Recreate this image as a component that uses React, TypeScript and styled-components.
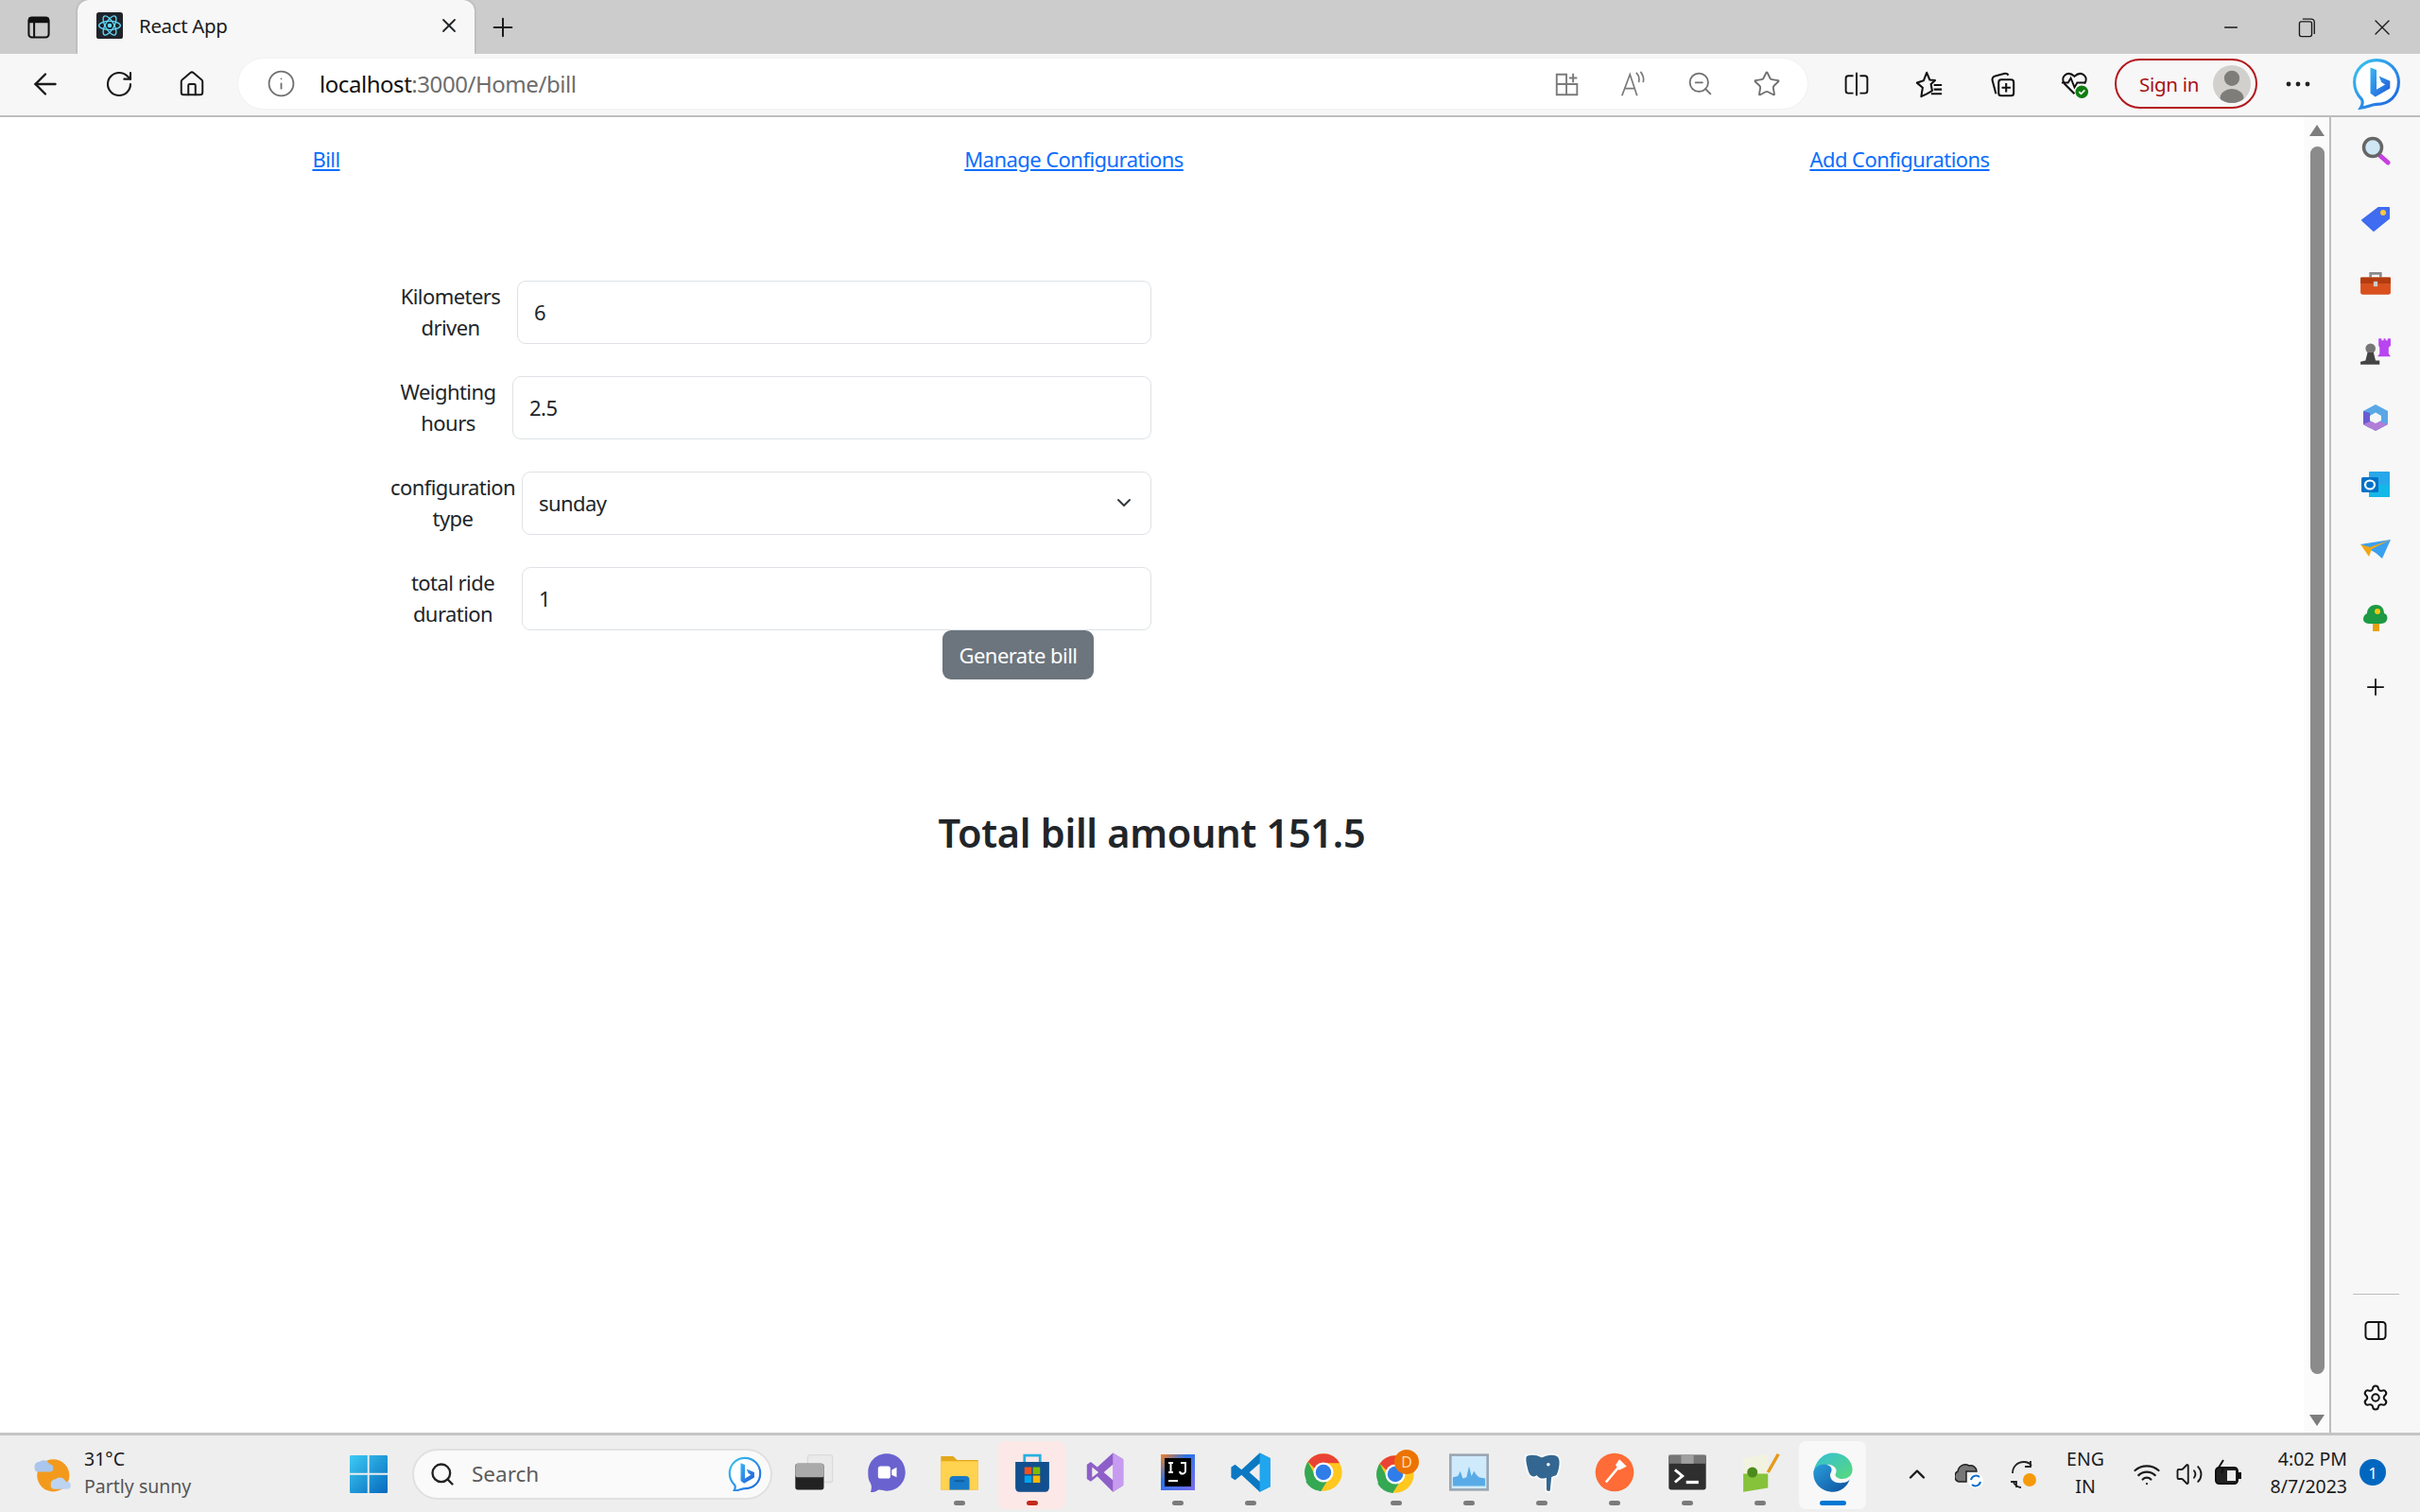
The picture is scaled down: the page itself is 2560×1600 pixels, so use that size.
import { ReactNode } from 'react';
import styled, { createGlobalStyle } from 'styled-components';
import {
  ArrowLeft, ChevronDown, ChevronUp, House, Info, Minus, Plus, RotateCw, Search, Settings, Star, Volume2, Wifi, X, ZoomOut,
} from 'lucide-react';

const UI_FONT = `"Noto Sans", "Open Sans", sans-serif`;

const GlobalStyle = createGlobalStyle`
  html, body { margin: 0; padding: 0; background: #fff; }
  body { font-family: ${UI_FONT}; color: #212529; }
  * { box-sizing: border-box; }
`;

const Desktop = styled.div`
  width: 2560px;
  height: 1600px;
  display: flex;
  flex-direction: column;
  overflow: hidden;
`;

/* ---------- tab strip ---------- */
const TabStrip = styled.div`
  height: 57px;
  flex: none;
  background: #cccccc;
  display: flex;
  align-items: stretch;
`;
const StripButton = styled.div<{ $w: number }>`
  width: ${(p) => p.$w}px;
  flex: none;
  display: flex;
  align-items: center;
  justify-content: center;
  color: #1a1a1a;
`;
const Tab = styled.div`
  width: 420px;
  flex: none;
  background: #f7f7f7;
  border-radius: 12px 12px 0 0;
  display: flex;
  align-items: center;
  padding: 0 15px 4px 20px;
  box-shadow: 0 0 3px rgba(0, 0, 0, 0.25);
`;
const TabTitle = styled.span`
  margin-left: 17px;
  font-size: 20.5px;
  letter-spacing: -0.35px;
  color: #1c1c1c;
  flex: 1;
`;
const WindowControls = styled.div`
  margin-left: auto;
  display: flex;
`;

/* ---------- toolbar ---------- */
const Toolbar = styled.div`
  height: 67px;
  flex: none;
  background: #f7f7f7;
  border-bottom: 2px solid #bdbdbd;
  display: flex;
  align-items: center;
  padding: 0 0 2px 9px;
`;
const ToolButton = styled.div<{ $w: number; $muted?: boolean }>`
  width: ${(p) => p.$w}px;
  flex: none;
  display: flex;
  align-items: center;
  justify-content: center;
  color: ${(p) => (p.$muted ? '#6f6f6f' : '#1a1a1a')};
`;
const AddressBar = styled.div`
  width: 1660px;
  height: 53px;
  margin-left: 11px;
  flex: none;
  background: #fff;
  border-radius: 27px;
  display: flex;
  align-items: center;
  padding: 0 8px 0 29px;
  box-shadow: 0 0 2px rgba(0, 0, 0, 0.08);
`;
const Url = styled.div`
  margin-left: 25px;
  font-size: 24px;
  letter-spacing: -0.45px;
  color: #111;
  flex: 1;
  span { color: #6d6d6d; }
`;
const ToolGroup = styled.div<{ $ml: number }>`
  margin-left: ${(p) => p.$ml}px;
  display: flex;
  align-items: center;
`;
const SignIn = styled.div`
  width: 151px;
  height: 53px;
  margin-left: 4px;
  flex: none;
  border: 2px solid #b3161b;
  border-radius: 27px;
  display: flex;
  align-items: center;
  justify-content: space-between;
  padding: 0 5px 0 24px;
  font-size: 20.5px;
  letter-spacing: -0.3px;
  color: #a80f14;
`;
const Avatar = styled.div`
  width: 40px;
  height: 40px;
  border-radius: 50%;
  background: #d2d0cc;
  display: flex;
  align-items: center;
  justify-content: center;
  overflow: hidden;
`;
const BingSlot = styled.div`
  margin-left: 27px;
  width: 52px;
  flex: none;
  display: flex;
`;

/* ---------- middle area ---------- */
const Page = styled.main`
  width: 2437px;
  flex: none;
  background: #fff;
  font-size: 22px;
  letter-spacing: -0.55px;
  line-height: 36px;
`;
const Middle = styled.div`
  flex: 1;
  min-height: 0;
  display: flex;
`;
const NavRow = styled.nav`
  display: grid;
  grid-template-columns: 690px 892px 855px;
  padding-top: 26px;
`;
const NavCell = styled.div`
  text-align: center;
  a { color: #0d6efd; text-decoration: underline; }
`;
const BillForm = styled.form`
  width: 1218px;
  margin-top: 111px;
  padding-left: 412px;
  display: flex;
  flex-direction: column;
  gap: 34.3px;
`;
const FormRow = styled.div`
  display: flex;
  align-items: center;
  gap: 6px;
  height: 66.7px;
`;
const FieldLabel = styled.label<{ $w: number }>`
  width: ${(p) => p.$w}px;
  flex: none;
  text-align: center;
  line-height: 33.5px;
  white-space: nowrap;
`;
const fieldCss = `
  width: 100%;
  height: 100%;
  border: 1.5px solid #dee2e6;
  border-radius: 9px;
  background: #fff;
  color: #212529;
  padding: 0 17px;
  font: 22px ${UI_FONT};
  letter-spacing: -0.55px;
  outline: none;
  appearance: none;
`;
const FieldBox = styled.div`
  flex: 1;
  height: 100%;
  position: relative;
`;
const TextField = styled.input`${fieldCss}`;
const SelectField = styled.select`${fieldCss}`;
const SelectCaret = styled.span`
  position: absolute;
  right: 17px;
  top: 21px;
  color: #343a40;
  display: flex;
  pointer-events: none;
`;
const ButtonRow = styled.div`
  display: flex;
  justify-content: flex-end;
  padding-right: 61px;
  margin-top: -34.3px;
`;
const GenerateButton = styled.button`
  width: 160px;
  height: 52px;
  padding: 0;
  border: none;
  border-radius: 9px;
  background: #6c757d;
  color: #fff;
  font: 22px ${UI_FONT};
  letter-spacing: -0.55px;
`;
const TotalHeading = styled.h3`
  margin: 135px 0 0;
  text-align: center;
  font-size: 41.5px;
  line-height: 54px;
  letter-spacing: -0.3px;
  font-weight: 600;
  color: #212529;
`;

const ScrollBar = styled.div`
  width: 27px;
  flex: none;
  background: #fbfbfb;
  display: flex;
  flex-direction: column;
  align-items: center;
  padding-top: 8px;
`;
const Triangle = styled.div<{ $down?: boolean }>`
  width: 0;
  height: 0;
  margin-left: 1px;
  border-left: 8px solid transparent;
  border-right: 8px solid transparent;
  ${(p) => (p.$down ? 'border-top: 12px solid #7d7d7d;' : 'border-bottom: 12px solid #7d7d7d;')}
`;
const ScrollThumb = styled.div`
  width: 15px;
  height: 1299px;
  margin: 11px 0 43px 1px;
  background: #8b8b8b;
  border-radius: 8px;
`;
const SideBar = styled.aside`
  width: 96px;
  flex: none;
  background: #f7f7f7;
  border-left: 2px solid #bdbdbd;
  display: flex;
  flex-direction: column;
  align-items: center;
  padding: 1px 0 0 0;
`;
const SideIcon = styled.div<{ $mt?: number }>`
  height: 70.5px;
  margin-top: ${(p) => p.$mt ?? 0}px;
  flex: none;
  display: flex;
  align-items: center;
  justify-content: center;
`;
const SideFoot = styled.div`
  margin-top: auto;
  padding-bottom: 2px;
  display: flex;
  flex-direction: column;
  align-items: center;
`;
const SideRule = styled.div`
  width: 49px;
  height: 1px;
  background: #bdbdbd;
  margin-bottom: 3px;
`;

/* ---------- taskbar ---------- */
const Taskbar = styled.footer`
  height: 84px;
  flex: none;
  background: #eeeeee;
  border-top: 3px solid #c4c4c4;
  display: flex;
  align-items: center;
  padding-left: 34px;
`;
const Weather = styled.div`
  width: 336px;
  flex: none;
  display: flex;
  align-items: center;
  gap: 13px;
`;
const TwoLines = styled.div<{ $align?: string; $w?: number }>`
  display: flex;
  flex-direction: column;
  ${(p) => (p.$w ? `width: ${p.$w}px; flex: none;` : '')}
  margin-top: -3px;
  text-align: ${(p) => p.$align ?? 'left'};
  font-size: 19.5px;
  line-height: 29px;
  color: #1b1b1b;
`;
const Dim = styled.span`
  color: #555;
`;
const SearchBox = styled.div`
  width: 381px;
  height: 54px;
  margin-left: 26px;
  flex: none;
  background: #fafafa;
  border: 2px solid #e0e0e0;
  border-radius: 27px;
  display: flex;
  align-items: center;
  padding: 0 9px 0 16px;
  font-size: 22.5px;
  color: #5c5c5c;
`;
const SearchLabel = styled.span`
  margin-left: 17px;
  flex: 1;
`;
const AppsRow = styled.div`
  margin-left: 5px;
  display: flex;
`;
const AppSlot = styled.div<{ $bg?: string }>`
  width: 77px;
  height: 74px;
  flex: none;
  position: relative;
  display: flex;
  align-items: center;
  justify-content: center;
  padding-bottom: 4px;
  &::before {
    content: '';
    position: absolute;
    left: 3px;
    right: 3px;
    top: 2px;
    bottom: 0;
    border-radius: 7px;
    background: ${(p) => p.$bg ?? 'transparent'};
  }
  svg { position: relative; }
`;
const RunDot = styled.span<{ $color?: string; $wide?: boolean }>`
  position: absolute;
  left: 50%;
  bottom: 4px;
  width: ${(p) => (p.$wide ? 28 : 12)}px;
  height: 5px;
  margin-left: ${(p) => (p.$wide ? -14 : -6)}px;
  border-radius: 3px;
  background: ${(p) => p.$color ?? '#7b7b7b'};
`;
const Tray = styled.div`
  margin-left: 23px;
  display: flex;
  align-items: center;
`;
const TraySlot = styled.div<{ $w: number }>`
  width: ${(p) => p.$w}px;
  flex: none;
  display: flex;
  align-items: center;
  justify-content: center;
  color: #1a1a1a;
`;
const Badge = styled.div`
  width: 28px;
  height: 28px;
  margin-left: 13px;
  margin-top: -3px;
  border-radius: 50%;
  background: #0067c0;
  color: #fff;
  font-size: 17px;
  display: flex;
  align-items: center;
  justify-content: center;
`;

/* ---------- drawn icons ---------- */
const Svg = ({ size, h, vb = '0 0 32 32', children }: { size: number; h?: number; vb?: string; children: ReactNode }) => (
  <svg width={size} height={h ?? size} viewBox={vb} fill="none">{children}</svg>
);

const TabsIcon = () => (
  <Svg size={26}><rect x="3" y="3" width="26" height="26" rx="4" stroke="#111" strokeWidth="2.5" /><path d="M3 9h26M10 9v20" stroke="#111" strokeWidth="2.5" /><rect x="3" y="3" width="26" height="6" fill="#111" /></Svg>
);
const ReactFavicon = () => (
  <Svg size={28}>
    <rect width="32" height="32" rx="3" fill="#20232a" />
    <g stroke="#61dafb" strokeWidth="1.5">
      <ellipse cx="16" cy="16" rx="13" ry="5.2" />
      <ellipse cx="16" cy="16" rx="13" ry="5.2" transform="rotate(60 16 16)" />
      <ellipse cx="16" cy="16" rx="13" ry="5.2" transform="rotate(120 16 16)" />
    </g>
    <circle cx="16" cy="16" r="2.6" fill="#61dafb" />
  </Svg>
);
const CopyIcon = () => (
  <Svg size={22}><rect x="5" y="7" width="19" height="23" rx="3" stroke="#1a1a1a" strokeWidth="2" /><path d="M10 3h13a5 5 0 0 1 5 5v18" stroke="#1a1a1a" strokeWidth="2" /></Svg>
);
const AppGridIcon = () => (
  <Svg size={30}><path d="M4 5h11v11H4zM4 16h11v12H4zM15 16h12v12H15zM18 9h9M22.5 4v10" stroke="#7a7a7a" strokeWidth="2" /></Svg>
);
const ReadAloud = () => (
  <Svg size={30}><path d="M3 29 12 5l8 24M6 21h12" stroke="#7a7a7a" strokeWidth="1.8" /><path d="M19 3c3 3 4 7 3 11M24 2c3 4 4 8 3 12" stroke="#7a7a7a" strokeWidth="1.8" /></Svg>
);
const SplitIcon = () => (
  <Svg size={28}><path d="M12 6H6a3 3 0 0 0-3 3v15a3 3 0 0 0 3 3h6M20 6h6a3 3 0 0 1 3 3v15a3 3 0 0 1-3 3h-6M16 2v28" stroke="#111" strokeWidth="2.2" /></Svg>
);
const FavIcon = () => (
  <Svg size={30}><path d="m13 3 3.4 8.2 6 .6-4.600 4.200 1.300 7.500L13 27l-6.200 3 1.600-10L2 14.500l7.500-2.500z" stroke="#111" strokeWidth="2.200" strokeLinejoin="round" /><path d="M21 17h9M21 22h9M18 27h12" stroke="#111" strokeWidth="2.200" /></Svg>
);
const CollectionsIcon = () => (
  <Svg size={30}><path d="M9 27 5 12a4 4 0 0 1 3-5l11-3a4 4 0 0 1 4 2" stroke="#111" strokeWidth="2.200" /><rect x="12" y="11" width="17" height="18" rx="3" stroke="#111" strokeWidth="2.200" fill="#f7f7f7" /><path d="M20.500 15v10M15.500 20h10" stroke="#111" strokeWidth="2.200" /></Svg>
);
const HealthIcon = () => (
  <Svg size={31}>
    <path d="M16 27 5 16C0 9 8 1 16 8c8-7 16 1 11 8" stroke="#111" strokeWidth="2.200" />
    <path d="M2 15h7l3-5 4 10 3-5h9" stroke="#111" strokeWidth="2" />
    <circle cx="24" cy="25" r="7" fill="#107c10" /><path d="m21 25 2.200 2.200 4-4.200" stroke="#fff" strokeWidth="1.800" />
  </Svg>
);
const AvatarFigure = () => (
  <Svg size={40}><circle cx="16" cy="11" r="6.500" fill="#7f7d7a" /><ellipse cx="16" cy="28" rx="10" ry="8" fill="#7f7d7a" /></Svg>
);
const BingGlyph = ({ size }: { size: number }) => (
  <Svg size={size} h={size * 1.05} vb="0 0 40 42">
    <defs>
      <linearGradient id="bingRing" x1="0" y1="0" x2="1" y2="1"><stop offset="0" stopColor="#39c6f0" /><stop offset="1" stopColor="#1f5fe0" /></linearGradient>
      <linearGradient id="bingB" x1="0" y1="0" x2="1" y2="1"><stop offset="0" stopColor="#38b6f5" /><stop offset="1" stopColor="#2157d8" /></linearGradient>
    </defs>
    <path d="M20 2c10 0 18 8 18 18 0 11-8 18-18 18-3 0-7 2-13 3 2-3 2-5 1-7C4 30 2 25 2 20 2 10 10 2 20 2Z" fill="#fff" stroke="url(#bingRing)" strokeWidth="2.400" />
    <path d="M15 8l5 2v16l7-4-3-2-2-5 9 4v6l-12 7-4-3z" fill="url(#bingB)" />
  </Svg>
);

const MagnifierApp = () => (
  <Svg size={32}><path d="m20 20 9 8" stroke="#c73fe0" strokeWidth="5" strokeLinecap="round" /><circle cx="13" cy="12" r="9.500" fill="#cfe6f5" stroke="#666" strokeWidth="3.500" /></Svg>
);
const TagApp = () => (
  <Svg size={32}><path d="M2 18 19 5h11v11L14 29z" fill="#3f6cf0" strokeLinejoin="round" stroke="#3f6cf0" strokeWidth="2" /><circle cx="24" cy="10" r="3" fill="#ffc83d" /></Svg>
);
const ToolboxApp = () => (
  <Svg size={34}><path d="M11 9V5h10v4" stroke="#8a8a8a" strokeWidth="2.500" /><rect x="1" y="9" width="30" height="17" rx="2" fill="#d9501e" /><rect x="1" y="9" width="30" height="6" fill="#b33c10" /><rect x="14" y="13" width="4" height="5" fill="#ccc" /></Svg>
);
const GamesApp = () => (
  <Svg size={34}><circle cx="11" cy="13" r="5" fill="#777" /><path d="M8 17h6l2 8h4v4H1v-3l5-1z" fill="#444" /><path d="M19 3h3v2h2V3h2v2h2V3h3v7l-2 2v6l2 3H18l2-3v-6l-1-2z" fill="#b845f0" /></Svg>
);
const OfficeApp = () => (
  <Svg size={32}>
    <path d="M16 2 29 9v14l-13 7L3 23V9z" fill="#5aa7e6" />
    <path d="M3 9v14l7 4V11z" fill="#6a5bd0" /><path d="m3 23 13 7 13-7-8-3H10z" fill="#b07ed8" />
    <path d="M16 10.500 22 14v5l-6 3-6-3v-5z" fill="#f7f7f7" />
  </Svg>
);
const OutlookApp = () => (
  <Svg size={32}><rect x="9" y="2" width="22" height="27" rx="1" fill="#28a8ea" /><path d="M9 16h22v13H9z" fill="#14b8e8" /><rect x="1" y="8" width="18" height="16" rx="1.500" fill="#0072c6" /><ellipse cx="10" cy="16" rx="5" ry="4.500" stroke="#fff" strokeWidth="2.200" /></Svg>
);
const SendApp = () => (
  <Svg size={32}><path d="M0 9 32 4 23 24l-7-6z" fill="#3aa0f0" /><path d="M0 9l10 3 22-8-20 10-3 8z" fill="#f0a818" /></Svg>
);
const TreeApp = () => (
  <Svg size={32}><rect x="13" y="21" width="7" height="9" fill="#e8a010" /><path d="M16 2c7 0 9 5 9 9 3 1 4 4 3 7s-4 4-7 4H10c-3 0-7-1-7-5 0-3 2-5 4-6 0-5 4-9 9-9Z" fill="#1d9a44" /><circle cx="18" cy="9" r="3" fill="#f2c811" /></Svg>
);
const PanelIcon = () => (
  <Svg size={26}><rect x="3" y="5" width="26" height="22" rx="4" stroke="#111" strokeWidth="2.400" /><path d="M20 5v22" stroke="#111" strokeWidth="2.400" /></Svg>
);

const WeatherIcon = () => (
  <Svg size={42}>
    <circle cx="17" cy="17" r="13" fill="#f39a1c" />
    <path d="M2 11a4 4 0 0 1 4-5 5 5 0 0 1 8 2 3 3 0 0 1 0 6H5a3 3 0 0 1-3-3Z" fill="#a9c6ec" />
    <path d="M15 25a4 4 0 0 1 4-5 5 5 0 0 1 8 2 3 3 0 0 1 2 6H18a3 3 0 0 1-3-3Z" fill="#bcd4f2" />
  </Svg>
);
const WindowsLogo = () => (
  <Svg size={40}>
    <defs><linearGradient id="winG" x1="0" y1="0" x2="1" y2="1"><stop offset="0" stopColor="#3ccbf4" /><stop offset="1" stopColor="#0669bc" /></linearGradient></defs>
    <path d="M0 1a1 1 0 0 1 1-1h14v15H0zM16.500 0H31a1 1 0 0 1 1 1v14H16.500zM0 16.500h15V32H1a1 1 0 0 1-1-1zM16.500 16.500H32V31a1 1 0 0 1-1 1H16.500z" fill="url(#winG)" />
  </Svg>
);
const TaskViewIcon = () => (
  <Svg size={42}><rect x="11" y="2" width="20" height="22" rx="2" fill="#eaeaea" stroke="#dadada" /><rect x="1" y="9" width="23" height="21" rx="2" fill="#222" /><rect x="1" y="9" width="23" height="11" rx="2" fill="#aaa" /></Svg>
);
const ChatIcon = () => (
  <Svg size={42}><path d="M16 1c9 0 15 7 15 15s-6 15-15 15c-3 0-6-2-8 0-2 1-4 1-5 1 1-3 1-5 0-7-2-3-2-6-2-9C1 8 7 1 16 1Z" fill="#6a62cf" /><rect x="9" y="11" width="10" height="10" rx="2" fill="#fff" /><path d="m20 14 4-2v8l-4-2z" fill="#fff" /></Svg>
);
const FolderIcon = () => (
  <Svg size={42}><path d="M1 3h10l3 3h17v24H1z" fill="#e3a81b" /><rect x="1" y="7" width="30" height="23" rx="1" fill="#ffd24f" /><path d="M8 30V22a3 3 0 0 1 3-3h10a3 3 0 0 1 3 3v8z" fill="#1779c9" /><path d="M12 23h8" stroke="#0f5d9c" strokeWidth="1.500" /></Svg>
);
const StoreIcon = () => (
  <Svg size={44}>
    <path d="M10 8V3h12v5" stroke="#28b0e0" strokeWidth="2" />
    <path d="M3 8h26v20a3 3 0 0 1-3 3H6a3 3 0 0 1-3-3z" fill="#114f8e" />
    <rect x="10" y="12" width="5.500" height="5.500" fill="#f25022" /><rect x="16.500" y="12" width="5.500" height="5.500" fill="#7fba00" />
    <rect x="10" y="18.500" width="5.500" height="5.500" fill="#00a4ef" /><rect x="16.500" y="18.500" width="5.500" height="5.500" fill="#ffb900" />
  </Svg>
);
const VsIcon = () => (
  <Svg size={44}><path d="M22 1 30 6v20l-8 5-12-12-5 4-3-2V10l3-2 5 4z" fill="#8e5fc8" /><path d="M22 1 30 6v20l-8 5z" fill="#c79cf0" /><path d="m6 12 5 4-5 4zM22 10v12l-7-6z" fill="#eeeeee" /></Svg>
);
const IntellijIcon = () => (
  <svg width="36" height="38" viewBox="0 0 36 38">
    <defs><linearGradient id="ijG" x1="0" y1="0" x2="1" y2="1"><stop offset="0" stopColor="#fc801d" /><stop offset="0.4" stopColor="#2b73e8" /><stop offset="1" stopColor="#7a6cf0" /></linearGradient></defs>
    <rect width="36" height="38" fill="url(#ijG)" /><rect x="4" y="4" width="28" height="30" fill="#000" />
    <path d="M8 9h5M10.500 9v10M8 19h5M21 9h5v8a3 3 0 0 1-6 1M8 28h10" stroke="#fff" strokeWidth="2" fill="none" />
  </svg>
);
const VscodeIcon = () => (
  <Svg size={44}><path d="M23 1 31 5v22l-8 4L9 18l-5 4-3-2V12l3-2 5 4z" fill="#0a78c2" /><path d="M23 1 31 5v22l-8 4z" fill="#1fa6ef" /><path d="m23 9-8 7 8 7z" fill="#eeeeee" /></Svg>
);
const ChromeIcon = () => (
  <Svg size={42}>
    <circle cx="16" cy="16" r="15" fill="#ffc81f" />
    <path d="M16 1a15 15 0 0 1 13 7.500H16a7.500 7.500 0 0 0-7 4.500L3.500 7.500A15 15 0 0 1 16 1Z" fill="#ea4335" />
    <path d="M3.500 7.500 9.500 19l5 12A15 15 0 0 1 3.500 7.500Z" fill="#34a853" />
    <path d="M9 18a7.500 7.500 0 0 0 10 5l-5 8h-1A15 15 0 0 1 2 24l1-16z" fill="#34a853" />
    <circle cx="16" cy="16" r="8" fill="#fff" /><circle cx="16" cy="16" r="6.300" fill="#2f7de9" />
  </Svg>
);
const ChromeBadged = () => (
  <svg width="44" height="44" viewBox="0 0 44 44" overflow="visible">
    <g transform="translate(0 3)"><ChromeIcon /></g>
    <circle cx="33" cy="11" r="13" fill="#ec7300" />
    <text x="33" y="17" textAnchor="middle" fontSize="16" fill="#ffd9b0" fontFamily={UI_FONT}>D</text>
  </svg>
);
const PerfIcon = () => (
  <Svg size={42}><rect x="1" y="2" width="30" height="28" fill="#cfeafb" stroke="#9aa7b3" strokeWidth="2" /><path d="M3 27v-7l4-1 2-4 2 6 3-1 2-9 2 8 2-4 2 3 2 2 5 1v6z" fill="#58abe6" /></Svg>
);
const PostgresIcon = () => (
  <Svg size={44}><path d="M4 3c6-2 10 0 12 1 4-2 10-3 13 0 2 3 1 10-1 14-2 2-3 1-4 2l-1 10c-1 2-4 1-4-1v-8c-3 1-6 0-7-2-3 2-6 0-7-4C4 11 2 6 4 3Z" fill="#336791" stroke="#fff" strokeWidth="1.200" /><circle cx="21" cy="10" r="1.300" fill="#fff" /></Svg>
);
const PostmanIcon = () => (
  <Svg size={42}><circle cx="16" cy="16" r="15.500" fill="#ff6c37" /><path d="m9 24 11-13M20 7l4 4-4 2-2-3z" stroke="#fff" strokeWidth="2" fill="#fff" /></Svg>
);
const TerminalIcon = () => (
  <Svg size={42}><rect x="1" y="2" width="30" height="28" rx="2" fill="#2f2f2f" /><rect x="1" y="2" width="30" height="7" fill="#757575" /><rect x="11" y="2" width="10" height="7" fill="#a0a0a0" /><path d="m6 14 6 5-6 5" stroke="#fff" strokeWidth="2.200" /><path d="M15 24h10" stroke="#fff" strokeWidth="2.500" /></Svg>
);
const NotepadIcon = () => (
  <Svg size={44}><path d="M3 5 22 2v26L3 31z" fill="#f2f2e0" /><path d="M3 17h19v11L3 31z" fill="#86c23a" /><path d="M22 16 30 2" stroke="#e59a1c" strokeWidth="2.500" /><circle cx="10" cy="16" r="4" fill="#4d8a1d" /></Svg>
);
const EdgeIcon = () => (
  <Svg size={44}>
    <defs>
      <linearGradient id="edgeA" x1="0" y1="0" x2="1" y2="1"><stop offset="0" stopColor="#33bfd8" /><stop offset="1" stopColor="#5ad97a" /></linearGradient>
      <linearGradient id="edgeB" x1="0" y1="0" x2="1" y2="1"><stop offset="0" stopColor="#2b9fdc" /><stop offset="1" stopColor="#0c4f9c" /></linearGradient>
    </defs>
    <path d="M16 1c9 0 15 6 15 13 0 4-3 7-8 7-3 0-6-2-5-4 2-3-1-7-6-7-5 0-10 4-11 7C2 8 8 1 16 1Z" fill="url(#edgeA)" />
    <path d="M1 17C1 12 6 9 11 10c4 1 5 4 3 7-1 4 3 8 9 7 3 0 5-1 6-3-2 6-7 10-13 10C8 31 1 25 1 17Z" fill="url(#edgeB)" />
  </Svg>
);
const CloudSync = () => (
  <Svg size={32}>
    <path d="M4 24a6 6 0 0 1-1-11C4 7 10 4 15 7c4-1 8 2 8 6H12v11z" fill="#777" stroke="#222" strokeWidth="1.500" />
    <circle cx="22" cy="23" r="8" fill="#fff" />
    <path d="M17 22a5.500 5.500 0 0 1 9-3M27 24a5.500 5.500 0 0 1-9 3" stroke="#0a6cc9" strokeWidth="2" />
  </Svg>
);
const SyncDot = () => (
  <Svg size={32}>
    <path d="M5 15C5 8 10 3 17 3c3 0 6 1 8 4M24 2v6h-6M3 24h6v6M6 25c3 4 6 5 8 5" stroke="#222" strokeWidth="1.800" />
    <circle cx="23" cy="22" r="7" fill="#f59a0c" />
  </Svg>
);
const BatteryIcon = () => (
  <Svg size={32}><rect x="3" y="9" width="23" height="17" rx="3.500" fill="#222" stroke="#111" strokeWidth="2" /><rect x="15" y="12" width="9" height="11" fill="#eeeeee" /><path d="M27 14h3v7h-3z" fill="#111" /><path d="M11 1 6 9h5l-2 6" stroke="#111" strokeWidth="2" /></Svg>
);

const apps: { icon: ReactNode; dot?: boolean; bg?: string; color?: string; wide?: boolean }[] = [
  { icon: <TaskViewIcon /> },
  { icon: <ChatIcon /> },
  { icon: <FolderIcon />, dot: true },
  { icon: <StoreIcon />, dot: true, bg: '#fde8e8', color: '#c42b1c' },
  { icon: <VsIcon /> },
  { icon: <IntellijIcon />, dot: true },
  { icon: <VscodeIcon />, dot: true },
  { icon: <ChromeIcon /> },
  { icon: <ChromeBadged />, dot: true },
  { icon: <PerfIcon />, dot: true },
  { icon: <PostgresIcon />, dot: true },
  { icon: <PostmanIcon />, dot: true },
  { icon: <TerminalIcon />, dot: true },
  { icon: <NotepadIcon />, dot: true },
  { icon: <EdgeIcon />, dot: true, bg: '#f8f8f8', color: '#0078d4', wide: true },
];

const sideApps = [<MagnifierApp />, <TagApp />, <ToolboxApp />, <GamesApp />, <OfficeApp />, <OutlookApp />, <SendApp />, <TreeApp />];

const App = () => {
  return (
    <Desktop>
      <GlobalStyle />
      <TabStrip>
        <StripButton $w={82}><TabsIcon /></StripButton>
        <Tab>
          <ReactFavicon />
          <TabTitle>React App</TabTitle>
          <X size={24} strokeWidth={1.8} />
        </Tab>
        <StripButton $w={60}><Plus size={32} strokeWidth={1.5} /></StripButton>
        <WindowControls>
          <StripButton $w={80}><Minus size={22} strokeWidth={1.4} /></StripButton>
          <StripButton $w={80}><CopyIcon /></StripButton>
          <StripButton $w={80}><X size={28} strokeWidth={1.2} /></StripButton>
        </WindowControls>
      </TabStrip>

      <Toolbar>
        <ToolButton $w={78}><ArrowLeft size={36} strokeWidth={1.6} /></ToolButton>
        <ToolButton $w={78}><RotateCw size={32} strokeWidth={1.6} /></ToolButton>
        <ToolButton $w={76}><House size={30} strokeWidth={1.6} /></ToolButton>
        <AddressBar>
          <ToolButton $w={32} $muted><Info size={31} strokeWidth={1.4} /></ToolButton>
          <Url>localhost<span>:3000/Home/bill</span></Url>
          <ToolButton $w={70}><AppGridIcon /></ToolButton>
          <ToolButton $w={70}><ReadAloud /></ToolButton>
          <ToolButton $w={70} $muted><ZoomOut size={29} strokeWidth={1.5} /></ToolButton>
          <ToolButton $w={71} $muted><Star size={30} strokeWidth={1.5} /></ToolButton>
        </AddressBar>
        <ToolGroup $ml={13}>
          <ToolButton $w={77}><SplitIcon /></ToolButton>
          <ToolButton $w={77}><FavIcon /></ToolButton>
          <ToolButton $w={77}><CollectionsIcon /></ToolButton>
          <ToolButton $w={77}><HealthIcon /></ToolButton>
        </ToolGroup>
        <SignIn>
          Sign in
          <Avatar><AvatarFigure /></Avatar>
        </SignIn>
        <ToolGroup $ml={13}>
          <ToolButton $w={60}><svg width="26" height="6" viewBox="0 0 26 6"><circle cx="3" cy="3" r="2.400" fill="#222" /><circle cx="13" cy="3" r="2.400" fill="#222" /><circle cx="23" cy="3" r="2.400" fill="#222" /></svg></ToolButton>
        </ToolGroup>
        <BingSlot><BingGlyph size={52} /></BingSlot>
      </Toolbar>

      <Middle>
        <Page>
          <NavRow>
            <NavCell><a href="#bill">Bill</a></NavCell>
            <NavCell><a href="#manage">Manage Configurations</a></NavCell>
            <NavCell><a href="#add">Add Configurations</a></NavCell>
          </NavRow>
          <BillForm>
            <FormRow>
              <FieldLabel $w={129}>Kilometers<br />driven</FieldLabel>
              <FieldBox><TextField readOnly value="6" /></FieldBox>
            </FormRow>
            <FormRow>
              <FieldLabel $w={124}>Weighting<br />hours</FieldLabel>
              <FieldBox><TextField readOnly value="2.5" /></FieldBox>
            </FormRow>
            <FormRow>
              <FieldLabel $w={134}>configuration<br />type</FieldLabel>
              <FieldBox>
                <SelectField defaultValue="sunday"><option value="sunday">sunday</option></SelectField>
                <SelectCaret><ChevronDown size={24} strokeWidth={2} /></SelectCaret>
              </FieldBox>
            </FormRow>
            <FormRow>
              <FieldLabel $w={134}>total ride<br />duration</FieldLabel>
              <FieldBox><TextField readOnly value="1" /></FieldBox>
            </FormRow>
            <ButtonRow>
              <GenerateButton type="button">Generate bill</GenerateButton>
            </ButtonRow>
          </BillForm>
          <TotalHeading>Total bill amount 151.5</TotalHeading>
        </Page>
        <ScrollBar>
          <Triangle />
          <ScrollThumb />
          <Triangle $down />
        </ScrollBar>
        <SideBar>
          {sideApps.map((icon, i) => <SideIcon key={i}>{icon}</SideIcon>)}
          <SideIcon $mt={3}><Plus size={28} strokeWidth={1.5} color="#111" /></SideIcon>
          <SideFoot>
            <SideRule />
            <SideIcon><PanelIcon /></SideIcon>
            <SideIcon><Settings size={30} strokeWidth={1.6} color="#111" /></SideIcon>
          </SideFoot>
        </SideBar>
      </Middle>

      <Taskbar>
        <Weather>
          <WeatherIcon />
          <TwoLines><span>31°C</span><Dim>Partly sunny</Dim></TwoLines>
        </Weather>
        <WindowsLogo />
        <SearchBox>
          <Search size={28} strokeWidth={2} color="#222" />
          <SearchLabel>Search</SearchLabel>
          <BingGlyph size={36} />
        </SearchBox>
        <AppsRow>
          {apps.map((app, i) => (
            <AppSlot key={i} $bg={app.bg}>
              {app.icon}
              {app.dot && <RunDot $color={app.color} $wide={app.wide} />}
            </AppSlot>
          ))}
        </AppsRow>
        <Tray>
          <TraySlot $w={56}><ChevronUp size={28} strokeWidth={2} /></TraySlot>
          <TraySlot $w={56}><CloudSync /></TraySlot>
          <TraySlot $w={56}><SyncDot /></TraySlot>
          <TraySlot $w={76}><TwoLines $align="center"><span>ENG</span><span>IN</span></TwoLines></TraySlot>
          <TraySlot $w={54}><Wifi size={30} strokeWidth={1.8} /></TraySlot>
          <TraySlot $w={36}><Volume2 size={30} strokeWidth={1.5} /></TraySlot>
          <TraySlot $w={46}><BatteryIcon /></TraySlot>
        </Tray>
        <TwoLines $align="right" $w={103}><span>4:02 PM</span><span>8/7/2023</span></TwoLines>
        <Badge>1</Badge>
      </Taskbar>
    </Desktop>
  );
};

export default App;
